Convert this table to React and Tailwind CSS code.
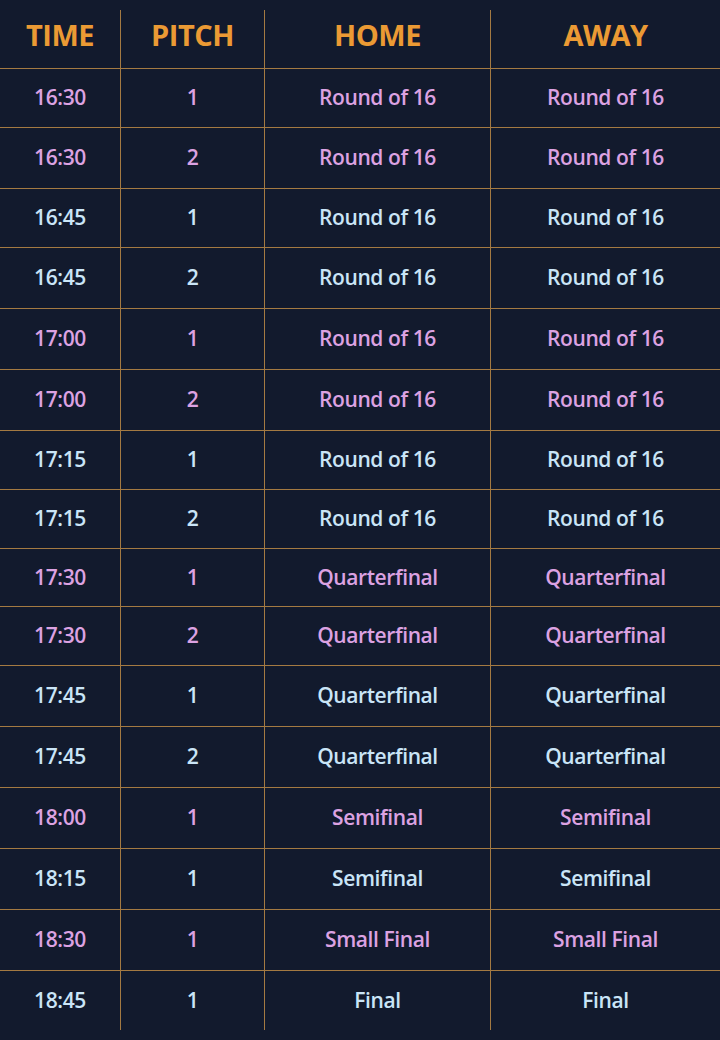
import React from 'react';

const rows = [
  { time: '16:30', pitch: 1, home: 'Round of 16', away: 'Round of 16', h: 'h-[59px]' },
  { time: '16:30', pitch: 2, home: 'Round of 16', away: 'Round of 16', h: 'h-[61px]' },
  { time: '16:45', pitch: 1, home: 'Round of 16', away: 'Round of 16', h: 'h-[59px]' },
  { time: '16:45', pitch: 2, home: 'Round of 16', away: 'Round of 16', h: 'h-[61px]' },
  { time: '17:00', pitch: 1, home: 'Round of 16', away: 'Round of 16', h: 'h-[61px]' },
  { time: '17:00', pitch: 2, home: 'Round of 16', away: 'Round of 16', h: 'h-[61px]' },
  { time: '17:15', pitch: 1, home: 'Round of 16', away: 'Round of 16', h: 'h-[59px]' },
  { time: '17:15', pitch: 2, home: 'Round of 16', away: 'Round of 16', h: 'h-[59px]' },
  { time: '17:30', pitch: 1, home: 'Quarterfinal', away: 'Quarterfinal', h: 'h-[58px]' },
  { time: '17:30', pitch: 2, home: 'Quarterfinal', away: 'Quarterfinal', h: 'h-[59px]' },
  { time: '17:45', pitch: 1, home: 'Quarterfinal', away: 'Quarterfinal', h: 'h-[61px]' },
  { time: '17:45', pitch: 2, home: 'Quarterfinal', away: 'Quarterfinal', h: 'h-[61px]' },
  { time: '18:00', pitch: 1, home: 'Semifinal', away: 'Semifinal', h: 'h-[61px]' },
  { time: '18:15', pitch: 1, home: 'Semifinal', away: 'Semifinal', h: 'h-[61px]' },
  { time: '18:30', pitch: 1, home: 'Small Final', away: 'Small Final', h: 'h-[61px]' },
  { time: '18:45', pitch: 1, home: 'Final', away: 'Final', h: 'h-[59px]' },
];

// pink for the 1st pair, blue for the 2nd, and so on (alternating by time slot)
const pinkTimes = ['16:30', '17:00', '17:30', '18:00', '18:30'];

const cols = 'grid grid-cols-[121px_144px_226px_1fr]';
const cell = 'flex items-center justify-center border-r border-[#a47a42] last:border-r-0';

export default function App() {
  return (
    <div className="w-[720px] h-[1040px] bg-[#121a2d] pt-[10px] font-['Open_Sans',sans-serif]">
      <div className={`${cols} h-[59px] border-b border-[#a47a42]`}>
        {['TIME', 'PITCH', 'HOME', 'AWAY'].map((h) => (
          <div key={h} className={`${cell} text-[29px] font-bold text-[#eb9a34] tracking-[-0.5px] pb-[9px]`}>
            {h}
          </div>
        ))}
      </div>
      {rows.map((r, i) => {
        const color = pinkTimes.includes(r.time) ? 'text-[#dca2e2]' : 'text-[#cae5f7]';
        const last = i === rows.length - 1;
        return (
          <div
            key={i}
            className={`${cols} ${r.h} ${last ? '' : 'border-b border-[#a47a42]'} ${color} text-[21px] font-semibold tracking-[-0.4px]`}
          >
            <div className={cell}>{r.time}</div>
            <div className={cell}>{r.pitch}</div>
            <div className={cell}>{r.home}</div>
            <div className={cell}>{r.away}</div>
          </div>
        );
      })}
    </div>
  );
}
